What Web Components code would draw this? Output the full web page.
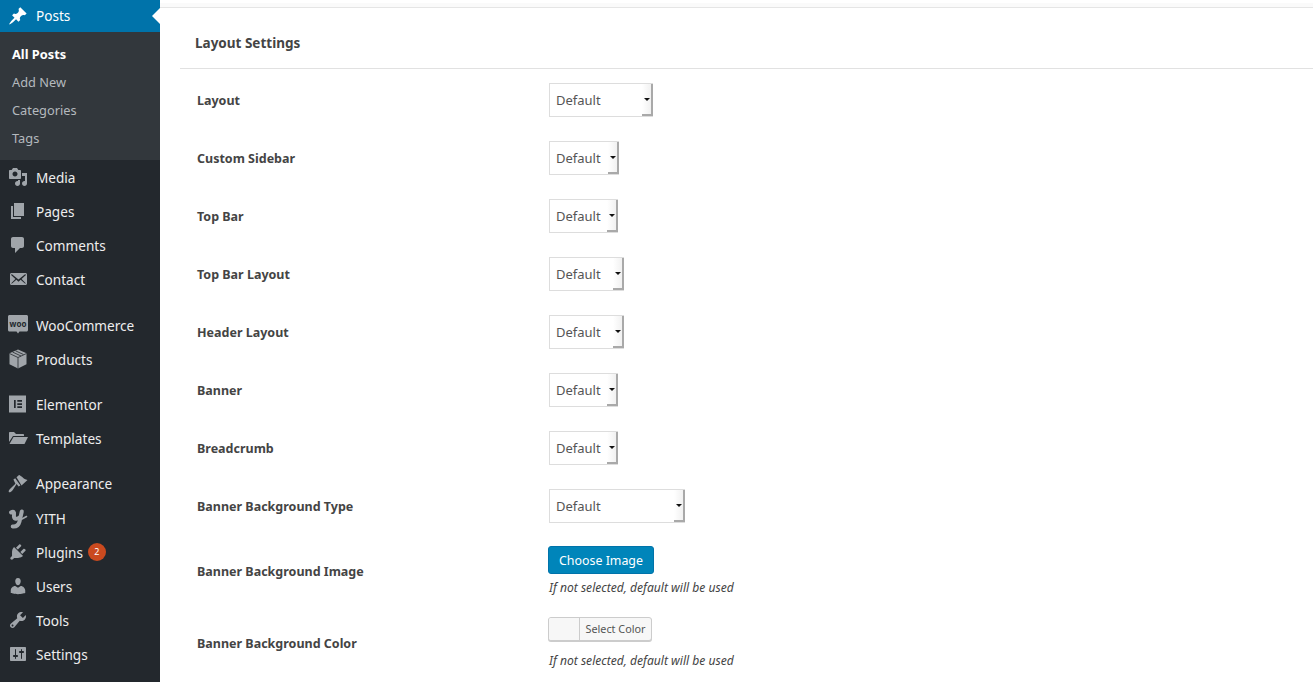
<!DOCTYPE html>
<html>
<head>
<meta charset="utf-8">
<title>Layout Settings</title>
<style>
  html, body { margin: 0; height: 682px; overflow: hidden; background: #fff; }
  body { display: flex; font-family: "Noto Sans", "Open Sans", sans-serif; color: #444; }
</style>
</head>
<body>
<wp-sidebar>
  <wp-menu-item icon="post" current>Posts</wp-menu-item>
  <wp-submenu>
    <wp-submenu-item current>All Posts</wp-submenu-item>
    <wp-submenu-item>Add New</wp-submenu-item>
    <wp-submenu-item>Categories</wp-submenu-item>
    <wp-submenu-item>Tags</wp-submenu-item>
  </wp-submenu>
  <wp-menu-item icon="media">Media</wp-menu-item>
  <wp-menu-item icon="page">Pages</wp-menu-item>
  <wp-menu-item icon="comments">Comments</wp-menu-item>
  <wp-menu-item icon="email">Contact</wp-menu-item>
  <wp-menu-item icon="woo" style="margin-top:12px">WooCommerce</wp-menu-item>
  <wp-menu-item icon="box">Products</wp-menu-item>
  <wp-menu-item icon="elementor" style="margin-top:11px">Elementor</wp-menu-item>
  <wp-menu-item icon="folder">Templates</wp-menu-item>
  <wp-menu-item icon="appearance" style="margin-top:11px">Appearance</wp-menu-item>
  <wp-menu-item icon="yith" style="margin-top:1px">YITH</wp-menu-item>
  <wp-menu-item icon="plugins" badge="2">Plugins</wp-menu-item>
  <wp-menu-item icon="users">Users</wp-menu-item>
  <wp-menu-item icon="tools">Tools</wp-menu-item>
  <wp-menu-item icon="settings">Settings</wp-menu-item>
</wp-sidebar>

<settings-panel heading="Layout Settings">
  <setting-row label="Layout"><wp-select width="104">Default</wp-select></setting-row>
  <setting-row label="Custom Sidebar"><wp-select width="70">Default</wp-select></setting-row>
  <setting-row label="Top Bar"><wp-select width="69">Default</wp-select></setting-row>
  <setting-row label="Top Bar Layout"><wp-select width="75">Default</wp-select></setting-row>
  <setting-row label="Header Layout"><wp-select width="75">Default</wp-select></setting-row>
  <setting-row label="Banner"><wp-select width="69">Default</wp-select></setting-row>
  <setting-row label="Breadcrumb"><wp-select width="69">Default</wp-select></setting-row>
  <setting-row label="Banner Background Type"><wp-select width="136">Default</wp-select></setting-row>
  <setting-row label="Banner Background Image" style="--pad:11px 0 12px">
    <wp-button>Choose Image</wp-button>
    <field-note style="margin-top:5px">If not selected, default will be used</field-note>
  </setting-row>
  <setting-row label="Banner Background Color" style="--pad:8px 0 13px">
    <color-button>Select Color</color-button>
    <field-note style="margin-top:11px">If not selected, default will be used</field-note>
  </setting-row>
</settings-panel>

<script>
// dashicons-style paths, 20x20 box
const ICONS = {
  post: '<path d="M10.44 3.02l1.82-1.82 6.36 6.35-1.83 1.82c-1.05-.68-2.48-.57-3.41.36l-.75.75c-.92.93-1.04 2.35-.35 3.41l-1.83 1.82-2.41-2.41-2.8 2.79c-.42.42-3.38 2.71-3.8 2.29s1.86-3.39 2.28-3.81l2.79-2.79L4.1 9.36l1.83-1.82c1.05.69 2.48.57 3.4-.36l.75-.75c.93-.92 1.05-2.35.36-3.41z"/>',
  media: '<path d="M13 11V4c0-.55-.45-1-1-1h-1.67L9 1H5L3.67 3H2c-.55 0-1 .45-1 1v7c0 .55.45 1 1 1h10c.55 0 1-.45 1-1zM7 4.5c1.38 0 2.5 1.12 2.5 2.5S8.38 9.5 7 9.5 4.5 8.38 4.5 7 5.62 4.5 7 4.5zM14 6h5v10.5c0 1.38-1.12 2.5-2.5 2.5S14 17.88 14 16.5s1.12-2.5 2.5-2.5c.17 0 .34.02.5.05V9h-3V6zm-4 8.05V13h2v3.5c0 1.38-1.12 2.5-2.5 2.5S7 17.88 7 16.5 8.12 14 9.5 14c.17 0 .34.02.5.05z"/>',
  page: '<path d="M6 15V2h10v13H6zm-1 1h8v2H3V5h2v11z"/>',
  comments: '<path d="M5 2h9c1.1 0 2 .9 2 2v7c0 1.1-.9 2-2 2h-2l-5 5v-5H5c-1.1 0-2-.9-2-2V4c0-1.1.9-2 2-2z"/>',
  email: '<path d="M19 14.5v-9c0-.83-.67-1.5-1.5-1.5H3.49c-.83 0-1.5.67-1.5 1.5v9c0 .83.67 1.5 1.5 1.5H17.5c.83 0 1.5-.67 1.5-1.5zm-1.31-9.11c.33.33.15.67-.03.84L13.6 9.95l3.9 4.06c.12.14.2.36.06.51-.13.16-.43.15-.56.05l-4.37-3.73-2.14 1.95-2.13-1.95-4.37 3.73c-.13.1-.43.11-.56-.05-.14-.15-.06-.37.06-.51l3.9-4.06-4.06-3.72c-.18-.17-.36-.51-.03-.84s.67-.17.95.07l6.24 5.04 6.25-5.04c.28-.24.62-.4.95-.07z"/>',
  woo: '<path d="M1.5 0h17c.8 0 1.500.7 1.500 1.500v13.500c0 .8-.7 1.500-1.500 1.500H11.500L10 18.500 8.500 16.500h-7C.7 16.500 0 15.800 0 15V1.500C0 .7.7 0 1.500 0z"/><text x="10" y="11.500" text-anchor="middle" font-size="8" font-weight="700" font-family="Noto Sans, sans-serif" fill="#23282d">woo</text>',
  box: '<path d="M10 .5l8.500 3.800v11L10 19.500l-8.500-4.200v-11z"/><path d="M1.500 4.500L10 8.500l8.500-4M4.500 3L13 7M7.500 1.800L15.500 5.500M10 8.500v11" fill="none" stroke="#23282d" stroke-width=".8"/>',
  elementor: '<path fill-rule="evenodd" d="M1 1.500h17v17H1zM6 6v8h1.700V6zM9.300 6v1.700h4.700V6zM9.300 9.200v1.700h4.700V9.200zM9.300 12.300V14h4.700v-1.700z"/>',
  folder: '<path d="M1 5c0-.6.4-1 1-1h4l2 2h7c.6 0 1 .4 1 1v1H5L1 14z"/><path d="M5.500 9H20l-3.500 7H1.500z"/>',
  appearance: '<path d="M8.500 4.300L11 2c2.300.6 4.300 4 8.500 5L13.500 12.600z"/><path d="M7.200 5.300l5.200 7.300-1.800 1-2-2.500-3.800 5.900C3.300 19.300 1.200 19.600.8 19.100c-.4-.9.2-2.600 2.200-4.100l4.400-4.200-2-4.300z"/>',
  yith: '<g fill="none" stroke="#a0a5aa" stroke-linecap="round"><path stroke-width="4" d="M3 4.500C5.500 2.800 6.500 4 6 7c-.6 3.800 2.300 5 5.300 2.500"/><path stroke-width="4" d="M13.800 3.500L11.500 13.500c-.9 3.700-3.500 5.300-6.800 5"/><path stroke-width="1.600" d="M14 11l4.500-2.500"/></g>',
  plugins: '<path d="M13.110 4.360L9.870 7.600 8 5.730l3.240-3.240c.35-.34 1.050-.2 1.560.32.52.51.66 1.210.31 1.550zm-8 1.770l.91-1.120 9.010 9.010-1.190.84c-.71.71-2.630 1.160-3.820 1.160H6.140L4.900 17.260c-.59.59-1.540.59-2.120 0-.59-.58-.59-1.530 0-2.120l1.240-1.240v-3.880c0-1.130.4-3.190 1.090-3.890zm7.260 3.970l3.240-3.240c.34-.35 1.040-.21 1.550.31.52.51.66 1.210.31 1.550l-3.240 3.250z"/>',
  users: '<path d="M10 9.250c-2.270 0-2.730-3.440-2.730-3.440C7 4.020 7.820 2 9.970 2c2.160 0 2.980 2.020 2.710 3.810 0 0-.41 3.440-2.680 3.440zm0 2.570L12.720 10c2.390 0 4.520 2.330 4.520 4.530v2.490s-3.650 1.130-7.240 1.130c-3.650 0-7.240-1.130-7.240-1.130v-2.490c0-2.250 1.940-4.480 4.470-4.480z"/>',
  tools: '<path d="M16.680 9.770c-1.340 1.340-3.300 1.670-4.950.99l-5.410 6.520c-.99.99-2.590.99-3.580 0s-.99-2.590 0-3.570l6.520-5.420c-.68-1.650-.35-3.610.99-4.950 1.280-1.280 3.120-1.620 4.720-1.060l-2.890 2.890 2.820 2.820 2.860-2.870c.53 1.580.18 3.390-1.080 4.650zM3.810 16.210c.4.39 1.040.39 1.430 0 .4-.4.4-1.040 0-1.430-.39-.4-1.030-.4-1.430 0-.39.39-.39 1.030 0 1.430z"/>',
  settings: '<path d="M18 16V4c0-.55-.45-1-1-1H3c-.55 0-1 .45-1 1v12c0 .55.45 1 1 1h14c.55 0 1-.45 1-1zM8 11h1c.55 0 1 .45 1 1s-.45 1-1 1H8v1.500c0 .28-.22.5-.5.5s-.5-.22-.5-.5V13H6c-.55 0-1-.45-1-1s.45-1 1-1h1V5.500c0-.28.22-.5.5-.5s.5.22.5.5V11zm5-2h-1c-.55 0-1-.45-1-1s.45-1 1-1h1V5.500c0-.28.22-.5.5-.5s.5.22.5.5V7h1c.55 0 1 .45 1 1s-.45 1-1 1h-1v5.500c0 .28-.22.5-.5.5s-.5-.22-.5-.5V9z"/>'
};

// small helper so each element only has to give its markup
class ShadowElement extends HTMLElement {
  constructor(html) {
    super();
    this.attachShadow({ mode: "open" }).innerHTML = html;
  }
}

class WpSidebar extends ShadowElement {
  constructor() {
    super(`<style>
      :host { display: block; flex: 0 0 160px; width: 160px; height: 682px; background: #23282d; }
    </style><slot></slot>`);
  }
}

class WpMenuItem extends ShadowElement {
  constructor() {
    super(`<style>
      :host { display: flex; align-items: center; height: 34px; color: #eee; font-size: 13.6px; position: relative; }
      :host([current]) { height: 32px; background: #0073aa; color: #fff; }
      :host([current]) .label { margin-bottom: 2px; }
      :host([current])::after {
        content: ""; position: absolute; right: 0; top: 8px;
        border: 8px solid transparent; border-right-color: #fff; border-left-width: 0;
      }
      svg { flex: 0 0 20px; width: 20px; height: 20px; margin: 0 8px; fill: #a0a5aa; overflow: visible; }
      :host([current]) svg { fill: #fff; }
      .badge {
        display: none; width: 18px; height: 18px; margin-left: 5px; border-radius: 50%;
        background: #ca4a1f; color: #fff; font-size: 9px; line-height: 18px; text-align: center;
      }
    </style><svg viewBox="0 0 20 20"></svg><span class="label"><slot></slot></span><span class="badge"></span>`);
  }
  connectedCallback() {
    this.shadowRoot.querySelector("svg").innerHTML = ICONS[this.getAttribute("icon")] || "";
    const badge = this.getAttribute("badge");
    if (badge) {
      const el = this.shadowRoot.querySelector(".badge");
      el.textContent = badge;
      el.style.display = "block";
    }
  }
}

class WpSubmenu extends ShadowElement {
  constructor() {
    super(`<style>
      :host { display: block; height: 128px; padding: 8px 0 0; box-sizing: border-box; background: #32373c; }
    </style><slot></slot>`);
  }
}

class WpSubmenuItem extends ShadowElement {
  constructor() {
    super(`<style>
      :host { display: block; height: 28px; line-height: 28px; padding-left: 12px; font-size: 12.8px; color: #b4b9be; }
      :host([current]) { color: #fff; font-weight: 700; }
    </style><slot></slot>`);
  }
}

class SettingsPanel extends ShadowElement {
  constructor() {
    super(`<style>
      :host { display: block; flex: 1; min-width: 0; border-top: 1px solid #e5e5e5; margin-top: 7px; box-shadow: 0 -4px 0 #fafafa; }
      h2 {
        margin: 0 0 2px 20px; padding: 0 0 0 15px; height: 61px; line-height: 70px;
        box-sizing: border-box; border-bottom: 1px solid #e1e1e1;
        font-size: 13.5px; font-weight: 700; color: #444;
      }
    </style><h2></h2><slot></slot>`);
  }
  connectedCallback() {
    this.shadowRoot.querySelector("h2").textContent = this.getAttribute("heading");
  }
}

class SettingRow extends ShadowElement {
  constructor() {
    super(`<style>
      :host { display: grid; grid-template-columns: 351px 1fr; align-items: center; padding: var(--pad, 12px 0); margin-left: 37px; }
      .label { font-size: 12.5px; font-weight: 700; color: #444; }
      .field { display: flex; flex-direction: column; align-items: flex-start; }
    </style><div class="label"></div><div class="field"><slot></slot></div>`);
  }
  connectedCallback() {
    this.shadowRoot.querySelector(".label").textContent = this.getAttribute("label");
  }
}

class WpSelect extends ShadowElement {
  constructor() {
    super(`<style>
      :host { display: flex; align-items: center; height: 34px; margin-left: 1px; box-sizing: border-box;
        border: 1px solid #ddd; border-right: 0; background: #fff; position: relative;
        font-size: 13px; color: #555; padding-left: 6px; }
      .arrow {
        position: absolute; right: 0; top: 0; bottom: 0; width: 11px;
        background: linear-gradient(90deg, #fff, #f1f1f1);
        border-right: 2px solid #a9a9a9; border-bottom: 2px solid #a9a9a9; box-sizing: border-box;
      }
      .arrow::after {
        content: ""; position: absolute; left: 2px; top: 14px;
        border: 3px solid transparent; border-top: 3px solid #111; border-bottom: 0;
      }
    </style><slot></slot><span class="arrow"></span>`);
  }
  connectedCallback() {
    this.style.width = this.getAttribute("width") + "px";
  }
}

class WpButton extends ShadowElement {
  constructor() {
    super(`<style>
      :host { display: inline-block; height: 28px; width: 106px; box-sizing: border-box; border-radius: 3px;
        background: #0085ba; border: 1px solid #0073aa; color: #fff; font-size: 12.4px; line-height: 28px; text-align: center; }
    </style><slot></slot>`);
  }
}

class ColorButton extends ShadowElement {
  constructor() {
    super(`<style>
      :host { display: inline-flex; height: 24px; width: 104px; box-sizing: border-box; border-radius: 3px;
        background: #f7f7f7; border: 1px solid #ccc; box-shadow: 0 1px 0 #ccc; overflow: hidden; }
      .swatch { width: 30px; background: #f7f7f7; border-right: 1px solid #ccc; }
      .text { flex: 1; font-size: 10.8px; line-height: 22px; color: #555; text-align: center; }
    </style><span class="swatch"></span><span class="text"><slot></slot></span>`);
  }
}

class FieldNote extends ShadowElement {
  constructor() {
    super(`<style>
      :host { display: block; margin-left: 1px; font-size: 12.1px; line-height: 18px; font-style: italic; color: #444; }
    </style><slot></slot>`);
  }
}

customElements.define("wp-sidebar", WpSidebar);
customElements.define("wp-menu-item", WpMenuItem);
customElements.define("wp-submenu", WpSubmenu);
customElements.define("wp-submenu-item", WpSubmenuItem);
customElements.define("settings-panel", SettingsPanel);
customElements.define("setting-row", SettingRow);
customElements.define("wp-select", WpSelect);
customElements.define("wp-button", WpButton);
customElements.define("color-button", ColorButton);
customElements.define("field-note", FieldNote);
</script>
</body>
</html>
